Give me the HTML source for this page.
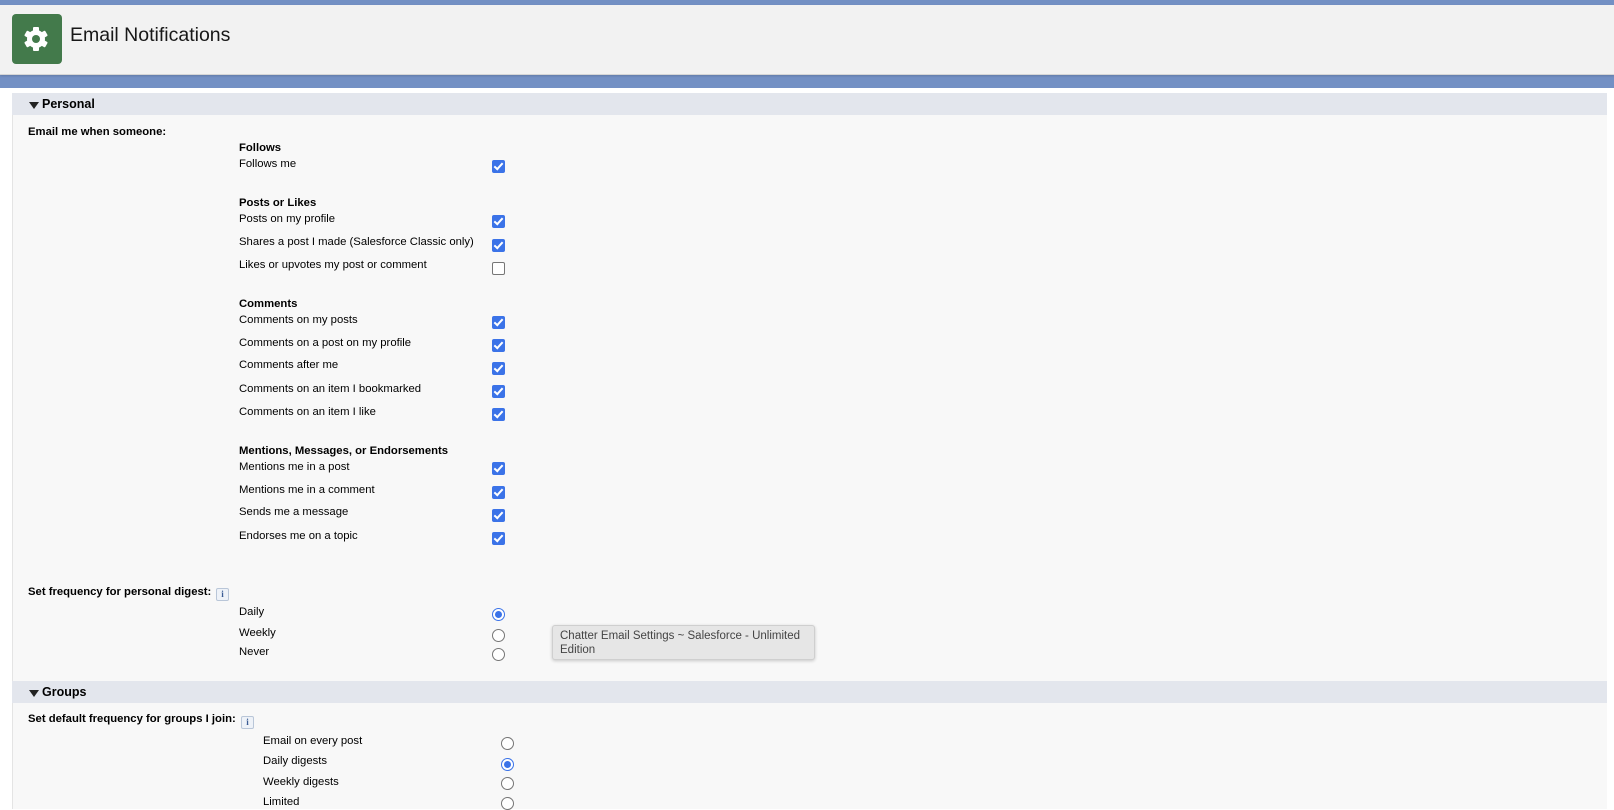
<!DOCTYPE html>
<html><head><meta charset="utf-8"><style>
*{margin:0;padding:0;box-sizing:border-box}
body{width:1614px;height:809px;overflow:hidden;background:#fff;font-family:"Liberation Sans",Arial,sans-serif;color:#000;position:relative}
.band{position:absolute;left:0;top:0;width:1614px;height:88px;background:#7390c4}
.card{position:absolute;left:0;top:5px;width:1614px;height:70px;background:#f2f2f2;border-bottom:1px solid #d6d6d6;box-shadow:0 1px 2px rgba(0,0,0,.15)}
.icon{position:absolute;left:12px;top:14px;width:50px;height:50px;background:#437a4b;border-radius:4px}
.title{position:absolute;left:70px;top:24px;font-size:19.5px;color:#181818}
.content{position:absolute;left:12px;top:93px;width:1595px;height:716px;background:#f8f8f8;border-left:1px solid #e4e4e4}
.bar{position:absolute;left:12px;width:1595px;height:22px;background:#e3e6ed;font-weight:bold;font-size:12.5px}
.bar span{position:absolute;left:30px;top:4px}
.bar i{position:absolute;left:17px;top:9px;width:0;height:0;border-left:5px solid transparent;border-right:5px solid transparent;border-top:7px solid #222}
.t{position:absolute;font-size:11.3px;line-height:14px;white-space:nowrap;margin-top:1px}
.b{font-weight:bold}
.cb{position:absolute;width:13px;height:13px;border-radius:2px;background:#3b73e8}
.cb:after{content:"";position:absolute;left:4px;top:1px;width:3px;height:7px;border:solid #fff;border-width:0 2px 2px 0;transform:rotate(42deg)}
.cb.off{background:#fff;border:1px solid #767676}
.cb.off:after{display:none}
.rd{position:absolute;width:13px;height:13px;border-radius:50%;border:1px solid #767676;background:#fff}
.rd.on{border:1.5px solid #3b73e8}
.rd.on:after{content:"";position:absolute;left:1.5px;top:1.5px;width:7px;height:7px;border-radius:50%;background:#3b73e8}
.info{position:absolute;width:13px;height:13px;border:1px solid #b9c6d8;background:#eef2f8;border-radius:2px;font-size:9px;font-family:"Liberation Serif",serif;font-weight:bold;color:#3a5b94;text-align:center;line-height:11px}
.tip{position:absolute;left:552px;top:625px;width:263px;height:35px;background:#e6e6e6;border:1px solid #cfcfcf;border-radius:3px;box-shadow:0 1px 3px rgba(0,0,0,.2);font-size:11.5px;color:#444;padding:3px 7px;line-height:14px}
</style></head><body>
<div class="band"></div>
<div class="card"></div>
<div class="icon"><svg width="50" height="50" viewBox="0 0 50 50"><g fill="#fff" transform="translate(24,25)"><g id="t"><rect x="-3" y="-12" width="6" height="6" rx="1"/></g><use href="#t" transform="rotate(60)"/><use href="#t" transform="rotate(120)"/><use href="#t" transform="rotate(180)"/><use href="#t" transform="rotate(240)"/><use href="#t" transform="rotate(300)"/><circle r="9"/></g><circle cx="24" cy="25" r="4" fill="#437a4b"/></svg></div>
<div class="title">Email Notifications</div>
<div class="content"></div>
<div class="bar" style="top:93px"><i></i><span>Personal</span></div>
<div class="t b" style="left:28px;top:124px">Email me when someone:</div>

<div class="t b" style="left:239px;top:140px">Follows</div>
<div class="t" style="left:239px;top:156px">Follows me</div><div class="cb" style="left:492px;top:160px"></div>

<div class="t b" style="left:239px;top:195px">Posts or Likes</div>
<div class="t" style="left:239px;top:211px">Posts on my profile</div><div class="cb" style="left:492px;top:215px"></div>
<div class="t" style="left:239px;top:234px">Shares a post I made (Salesforce Classic only)</div><div class="cb" style="left:492px;top:239px"></div>
<div class="t" style="left:239px;top:257px">Likes or upvotes my post or comment</div><div class="cb off" style="left:492px;top:262px"></div>

<div class="t b" style="left:239px;top:296px">Comments</div>
<div class="t" style="left:239px;top:312px">Comments on my posts</div><div class="cb" style="left:492px;top:316px"></div>
<div class="t" style="left:239px;top:335px">Comments on a post on my profile</div><div class="cb" style="left:492px;top:339px"></div>
<div class="t" style="left:239px;top:357px">Comments after me</div><div class="cb" style="left:492px;top:362px"></div>
<div class="t" style="left:239px;top:381px">Comments on an item I bookmarked</div><div class="cb" style="left:492px;top:385px"></div>
<div class="t" style="left:239px;top:404px">Comments on an item I like</div><div class="cb" style="left:492px;top:408px"></div>

<div class="t b" style="left:239px;top:443px">Mentions, Messages, or Endorsements</div>
<div class="t" style="left:239px;top:459px">Mentions me in a post</div><div class="cb" style="left:492px;top:462px"></div>
<div class="t" style="left:239px;top:482px">Mentions me in a comment</div><div class="cb" style="left:492px;top:486px"></div>
<div class="t" style="left:239px;top:504px">Sends me a message</div><div class="cb" style="left:492px;top:509px"></div>
<div class="t" style="left:239px;top:528px">Endorses me on a topic</div><div class="cb" style="left:492px;top:532px"></div>

<div class="t b" style="left:28px;top:584px">Set frequency for personal digest:</div><div class="info" style="left:216px;top:588px">i</div>
<div class="t" style="left:239px;top:604px">Daily</div><div class="rd on" style="left:492px;top:608px"></div>
<div class="t" style="left:239px;top:625px">Weekly</div><div class="rd" style="left:492px;top:629px"></div>
<div class="t" style="left:239px;top:644px">Never</div><div class="rd" style="left:492px;top:648px"></div>

<div class="tip">Chatter Email Settings ~ Salesforce - Unlimited Edition</div>

<div class="bar" style="top:681px"><i></i><span>Groups</span></div>
<div class="t b" style="left:28px;top:711px">Set default frequency for groups I join:</div><div class="info" style="left:241px;top:716px">i</div>
<div class="t" style="left:263px;top:733px">Email on every post</div><div class="rd" style="left:501px;top:737px"></div>
<div class="t" style="left:263px;top:753px">Daily digests</div><div class="rd on" style="left:501px;top:758px"></div>
<div class="t" style="left:263px;top:774px">Weekly digests</div><div class="rd" style="left:501px;top:777px"></div>
<div class="t" style="left:263px;top:794px">Limited</div><div class="rd" style="left:501px;top:797px"></div>
</body></html>
